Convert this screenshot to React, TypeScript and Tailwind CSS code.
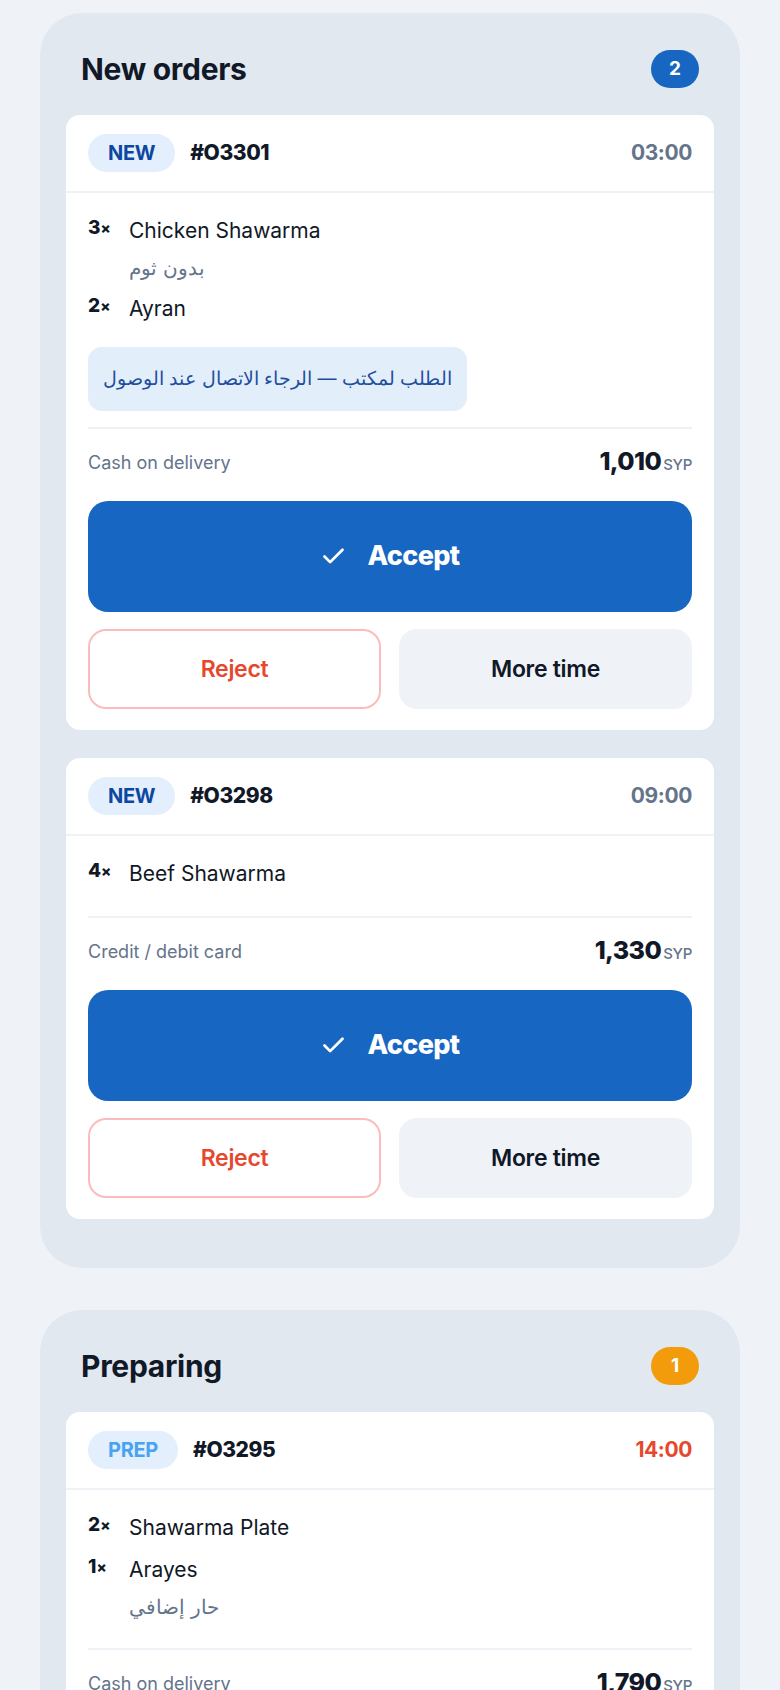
import { Check } from "lucide-react"

type Item = { qty: number; name: string; mod?: string }
type Order = {
  id: string
  status: "NEW" | "PREP"
  time: string
  items: Item[]
  note?: string
  payment: string
  total: string
  late?: boolean
  actions?: boolean
}

const newOrders: Order[] = [
  {
    id: "#O3301",
    status: "NEW",
    time: "03:00",
    items: [
      { qty: 3, name: "Chicken Shawarma", mod: "بدون ثوم" },
      { qty: 2, name: "Ayran" },
    ],
    note: "الطلب لمكتب — الرجاء الاتصال عند الوصول",
    payment: "Cash on delivery",
    total: "1,010",
    actions: true,
  },
  {
    id: "#O3298",
    status: "NEW",
    time: "09:00",
    items: [{ qty: 4, name: "Beef Shawarma" }],
    payment: "Credit / debit card",
    total: "1,330",
    actions: true,
  },
]

const preparing: Order[] = [
  {
    id: "#O3295",
    status: "PREP",
    time: "14:00",
    late: true,
    items: [
      { qty: 2, name: "Shawarma Plate" },
      { qty: 1, name: "Arayes", mod: "حار إضافي" },
    ],
    payment: "Cash on delivery",
    total: "1,790",
    actions: true,
  },
]

function OrderCard({ order }: { order: Order }) {
  return (
    <div className="rounded-[14px] bg-white">
      {/* header */}
      <div className="flex items-center border-b-2 border-[#eef2f7] px-[22px] py-[19px]">
        <span
          className={
            "flex h-[38px] items-center rounded-full bg-[#e3effc] px-[20px] text-[20px] font-bold tracking-[-0.3px] " +
            (order.status === "NEW" ? "text-[#0d47a1]" : "text-[#4aa3f0]")
          }
        >
          {order.status}
        </span>
        <span className="ml-[15px] text-[21px] font-extrabold tracking-[-0.4px] text-[#111827]">{order.id}</span>
        <span
          className={
            "ml-auto text-[21px] font-bold tracking-[-0.4px] " + (order.late ? "text-[#e5482d]" : "text-[#64748b]")
          }
        >
          {order.time}
        </span>
      </div>

      <div className="flex flex-col px-[22px] pt-[24px] pb-[21px]">
        <div className="flex flex-col gap-[14px]">
          {order.items.map((it, i) => (
            <div key={i} className="flex">
              <span className="w-[41px] shrink-0 text-[19px] leading-[22px] font-extrabold text-[#111827]">
                {it.qty}
                <span className="text-[15px] align-top">×</span>
              </span>
              <div className="flex flex-col">
                <span className="text-[21px] leading-[28px] text-[#111827]">{it.name}</span>
                {it.mod && (
                  <span className="mt-[10px] text-[20px] leading-[26px] text-[#64748b]">{it.mod}</span>
                )}
              </div>
            </div>
          ))}
        </div>

        {order.note && (
          <div
            dir="rtl"
            className="mt-[24px] flex h-[64px] items-center self-start rounded-[14px] bg-[#e3eefb] px-[15px] text-[19px] text-[#1e4f9c]"
          >
            {order.note}
          </div>
        )}

        <div
          className={
            "h-[2px] bg-[#eef2f7] " + (order.note ? "mt-[16px]" : "mt-[28px]")
          }
        />

        <div className="mt-[17px] flex h-[32px] items-center justify-between">
          <span className="text-[18px] text-[#64748b]">{order.payment}</span>
          <span className="flex items-baseline">
            <span className="text-[25px] font-extrabold tracking-[-0.6px] text-[#111827]">{order.total}</span>
            <span className="ml-[2px] text-[15px] font-medium tracking-[-0.3px] text-[#64748b]">SYP</span>
          </span>
        </div>

        {order.actions && (
          <>
            <button className="mt-[23px] flex h-[111px] w-full items-center justify-center gap-[20px] rounded-[20px] bg-[#1766c1] text-[27px] font-extrabold tracking-[-0.6px] text-white">
              <Check size={27} strokeWidth={2.5} />
              Accept
            </button>
            <div className="mt-[17px] grid grid-cols-2 gap-[18px]">
              <button className="h-[80px] rounded-[18px] border-2 border-[#fbbcbc] text-[23px] font-semibold tracking-[-0.3px] text-[#e5482d]">
                Reject
              </button>
              <button className="h-[80px] rounded-[18px] bg-[#eff3f8] text-[23px] font-semibold tracking-[-0.3px] text-[#111827]">
                More time
              </button>
            </div>
          </>
        )}
      </div>
    </div>
  )
}

function Column({ title, count, badge, orders }: { title: string; count: number; badge: string; orders: Order[] }) {
  return (
    <section className="rounded-[42px] bg-[#e1e8f0] px-[26px] pt-[36px] pb-[49px]">
      <div className="flex h-[40px] items-center justify-between px-[15px]">
        <h2 className="text-[30px] font-bold tracking-[-0.3px] text-[#111827]">{title}</h2>
        <span
          className={
            "flex h-[38px] w-[48px] items-center justify-center rounded-full text-[19px] font-bold text-white " +
            badge
          }
        >
          {count}
        </span>
      </div>
      <div className="mt-[26px] flex flex-col gap-[28px]">
        {orders.map((o) => (
          <OrderCard key={o.id} order={o} />
        ))}
      </div>
    </section>
  )
}

export default function App() {
  return (
    <div className="flex min-h-screen flex-col gap-[42px] bg-[#eff3f8] px-[40px] pt-[13px] font-[Inter,sans-serif]">
      <Column title="New orders" count={2} badge="bg-[#1766c1]" orders={newOrders} />
      <Column title="Preparing" count={1} badge="bg-[#f39c0b]" orders={preparing} />
    </div>
  )
}
